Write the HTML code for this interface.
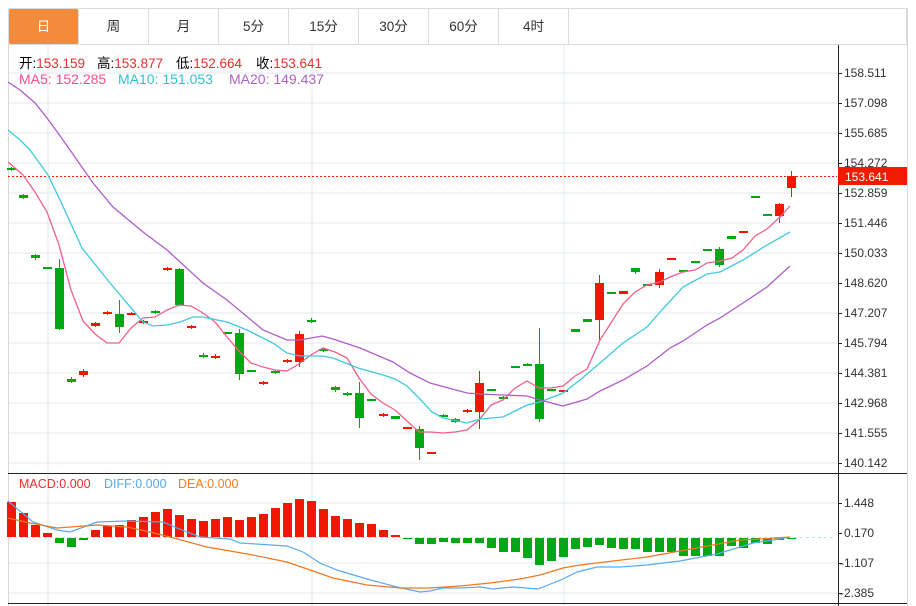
<!DOCTYPE html>
<html><head><meta charset="utf-8"><style>
*{margin:0;padding:0;box-sizing:border-box}
body{width:916px;height:606px;background:#fff;position:relative;overflow:hidden;font-family:"Liberation Sans","Noto Sans CJK SC",sans-serif}
.tabs{position:absolute;left:8px;top:8px;width:899px;height:37px;border:1px solid #dcdcdc;border-right:1px solid #dcdcdc}
.tab{position:absolute;top:0;width:70px;height:35px;border-right:1px solid #dcdcdc;text-align:center;line-height:35px;font-size:13.5px;color:#333}
.tab.on{background:#f28c3c;color:#fff;border-radius:2px}
.txt{position:absolute;font-size:13.5px;white-space:nowrap}
.r{color:#e8302c}
svg{position:absolute;left:0;top:0}
</style></head><body>
<div class="tabs">
<div class="tab on" style="left:0">日</div>
<div class="tab" style="left:70px">周</div>
<div class="tab" style="left:140px">月</div>
<div class="tab" style="left:210px">5分</div>
<div class="tab" style="left:280px">15分</div>
<div class="tab" style="left:350px">30分</div>
<div class="tab" style="left:420px">60分</div>
<div class="tab" style="left:490px">4时</div>
</div>
<svg width="916" height="606" id="s">
<g stroke="#e3e8ee" stroke-width="1">
<line x1="8" y1="73" x2="837" y2="73"/><line x1="8" y1="103" x2="837" y2="103"/><line x1="8" y1="133" x2="837" y2="133"/><line x1="8" y1="163" x2="837" y2="163"/><line x1="8" y1="193" x2="837" y2="193"/><line x1="8" y1="223" x2="837" y2="223"/><line x1="8" y1="253" x2="837" y2="253"/><line x1="8" y1="283" x2="837" y2="283"/><line x1="8" y1="313" x2="837" y2="313"/><line x1="8" y1="343" x2="837" y2="343"/><line x1="8" y1="373" x2="837" y2="373"/><line x1="8" y1="403" x2="837" y2="403"/><line x1="8" y1="433" x2="837" y2="433"/><line x1="8" y1="463" x2="837" y2="463"/>
<line x1="8" y1="503" x2="837" y2="503"/><line x1="8" y1="563" x2="837" y2="563"/><line x1="8" y1="593" x2="837" y2="593"/>
<line x1="48" y1="45" x2="48" y2="606"/><line x1="312" y1="45" x2="312" y2="606"/><line x1="564" y1="45" x2="564" y2="606"/>
</g>
<line x1="8.5" y1="45" x2="8.5" y2="606" stroke="#d8d8d8"/>
<line x1="907.5" y1="8" x2="907.5" y2="606" stroke="#d8d8d8"/>
<line x1="838.5" y1="45" x2="838.5" y2="606" stroke="#222"/>
<line x1="8" y1="473.5" x2="907" y2="473.5" stroke="#222"/>
<line x1="8" y1="603.5" x2="907" y2="603.5" stroke="#222"/>
<line x1="8" y1="537.5" x2="836" y2="537.5" stroke="#bfe0ee" stroke-dasharray="3,3"/>
<g id="g"></g>
<line x1="8" y1="176.5" x2="837" y2="176.5" stroke="#f01a00" stroke-dasharray="2,2"/>
<polyline fill="none" stroke="#f06088" stroke-width="1.3" points="8,162 23,175 35,192 47,212 59,245 71,290 83,321 95,334 107,343 119,343 131,328 143,318 155,317 167,310 179,305 191,306 203,313 215,322 227,337 239,351 251,363 263,367 275,370 287,371 299,364 311,355 323,348 335,352 347,358 359,378 371,394 383,403 395,410 407,421 419,432 431,432 443,433 455,432 467,430 479,420 491,405 503,400 515,388 527,381 539,388 551,388 563,386 575,376 587,369 600,340 623,304 635,292 647,285 660,282 670,277 683,272 695,270 707,263 720,261 732,258 743,250 755,236 767,229 780,217 790,206"/>
<polyline fill="none" stroke="#40c8e0" stroke-width="1.3" points="8,130 20,140 30,150 48,175 60,200 82,248 110,283 143,322 153,326 167,325 180,322 193,317 203,317 227,322 247,330 273,343 287,353 300,356 322,356 333,358 358,368 383,375 395,379 407,386 417,396 432,412 443,418 467,423 480,419 503,417 527,405 540,402 563,393 580,380 600,363 623,343 647,327 660,312 683,287 707,274 720,272 743,260 767,245 790,232"/>
<polyline fill="none" stroke="#b05cc8" stroke-width="1.3" points="8,82 20,90 35,103 47,118 58,133 70,150 93,183 113,207 143,232 167,250 203,283 227,300 263,330 287,340 300,340 322,336 333,339 360,348 393,362 410,373 430,383 467,393 480,394 527,396 540,400 563,406 587,399 600,391 623,380 647,366 670,348 683,341 707,325 720,318 743,303 767,287 790,266"/>
<polyline fill="none" stroke="#5aaaf0" stroke-width="1.2" points="8,501 33,522 57,530 70,532 97,522 127,521 163,522 177,528 200,537 230,539 240,543 287,546 303,552 320,563 337,570 367,579 397,587 420,592 430,591 443,588 460,588 480,587 493,589 513,587 538,589 563,579 577,572 597,567 620,567 647,565 680,561 717,554 730,550 753,543 773,540 790,537"/>
<polyline fill="none" stroke="#f07820" stroke-width="1.2" points="8,518 30,523 57,528 97,525 127,527 150,532 170,537 207,547 253,555 287,562 310,570 333,578 367,585 400,588 430,588 460,586 490,583 520,579 540,575 563,568 580,565 613,561 647,557 680,551 713,545 740,540 760,539 790,537"/>
<rect x="838" y="167" width="69" height="18" fill="#f01a00"/>
<text x="845" y="181" font-size="12" fill="#fff" font-family="Liberation Sans,sans-serif">153.641</text>
<g font-size="12" fill="#333" font-family="Liberation Sans,sans-serif" id="ax"></g>
</svg>
<div class="txt" style="left:19px;top:52px">开:<span class="r">153.159</span></div>
<div class="txt" style="left:97px;top:52px">高:<span class="r">153.877</span></div>
<div class="txt" style="left:176px;top:52px">低:<span class="r">152.664</span></div>
<div class="txt" style="left:256px;top:52px">收:<span class="r">153.641</span></div>
<div class="txt" style="left:19px;top:71px;font-size:14px;color:#f0508a">MA5: 152.285</div>
<div class="txt" style="left:118px;top:71px;font-size:14px;color:#30c0d8">MA10: 151.053</div>
<div class="txt" style="left:229px;top:71px;font-size:14px;color:#b060c8">MA20: 149.437</div>
<div class="txt" style="left:19px;top:477px;font-size:12.5px;color:#e8302c">MACD:0.000</div>
<div class="txt" style="left:104px;top:477px;font-size:12.5px;color:#55aaee">DIFF:0.000</div>
<div class="txt" style="left:178px;top:477px;font-size:12.5px;color:#f08020">DEA:0.000</div>
<script>
var R="#f01800",G="#00a814",ns="http://www.w3.org/2000/svg",g=document.getElementById('g');
function el(t,a){var e=document.createElementNS(ns,t);for(var k in a)e.setAttribute(k,a[k]);g.appendChild(e);}
var c=[[168,170,167,171,G],[195,198,194,199,G],[255,258,254,260,G],[267,269,267,269,G],[268,329,259,330,G],[379,382,377,383,G],[371,375,369,377,R],[323,326,322,327,R],[312,314,311,315,R],[314,327,300,333,G],[313,315,312,315,R],[321,323,320,324,R],[311,313,310,314,G],[268,270,267,271,R],[269,305,268,306,G],[326,328,325,329,R],[355,357,353,358,G],[356,358,354,359,R],[332,334,332,334,G],[333,374,329,380,G],[370,372,370,372,G],[382,384,381,385,R],[371,373,370,374,G],[360,362,359,363,R],[334,362,331,367,R],[320,322,318,323,G],[349,351,348,352,G],[387,390,386,392,G],[393,395,392,396,G],[393,418,382,428,G],[399,401,399,401,G],[414,416,413,417,R],[416,419,416,419,G],[427,429,427,429,R],[429,448,426,460,G],[452,454,452,454,R],[415,417,414,417,G],[419,422,418,423,G],[410,412,409,413,R],[383,412,371,429,R],[389,391,389,391,G],[397,399,396,400,G],[366,368,366,368,G],[364,366,363,366,G],[364,419,328,422,G],[389,391,389,391,G],[390,392,390,392,R],[329,332,329,332,G],[319,322,319,322,G],[283,320,275,340,R],[292,294,292,294,G],[291,294,291,294,R],[268,272,268,274,G],[284,286,284,286,G],[272,285,269,288,R],[258,260,258,260,R],[270,272,270,272,G],[261,263,261,263,G],[249,251,249,251,G],[249,265,247,267,G],[236,239,236,239,G],[231,233,231,233,R],[196,198,196,198,G],[214,216,214,216,G],[204,216,203,223,R],[176,188,171,197,R]];
var m=[502,513,525,533,-543,-547,-540,530,526,525,520,517,512,509,515,519,521,519,517,520,517,514,508,503,499,501,509,516,519,523,524,530,535,-539,-544,-544,-542,-543,-543,-543,-548,-552,-552,-558,-565,-561,-557,-549,-547,-545,-548,-549,-549,-552,-552,-552,-556,-556,-556,-556,-546,-548,-543,-544,-540,-539];
for(var i=0;i<c.length;i++){var x=11+12*i,d=c[i];
el('line',{x1:x+.5,y1:d[2],x2:x+.5,y2:d[3],stroke:d[4]});
el('rect',{x:x-4,y:d[0],width:9,height:Math.max(2,d[1]-d[0]),fill:d[4]});
var v=m[i];if(v>0)el('rect',{x:x-4,y:v,width:9,height:537-v,fill:R});else el('rect',{x:x-4,y:538,width:9,height:-v-538,fill:G});}
var ax=document.getElementById('ax');
var L=[["158.511",73],["157.098",103],["155.685",133],["154.272",163],["152.859",193],["151.446",223],["150.033",253],["148.620",283],["147.207",313],["145.794",343],["144.381",373],["142.968",403],["141.555",433],["140.142",463],["1.448",503],["0.170",533],["-1.107",563],["-2.385",593]];
L.forEach(function(a){var t=document.createElementNS(ns,'text');t.setAttribute('x',a[0][0]=='-'?840:844);t.setAttribute('y',a[1]+4);t.textContent=a[0];ax.appendChild(t);
var l=document.createElementNS(ns,'line');l.setAttribute('x1',838);l.setAttribute('x2',842);l.setAttribute('y1',a[1]+.5);l.setAttribute('y2',a[1]+.5);l.setAttribute('stroke','#222');ax.appendChild(l);});
</script>
</body></html>
